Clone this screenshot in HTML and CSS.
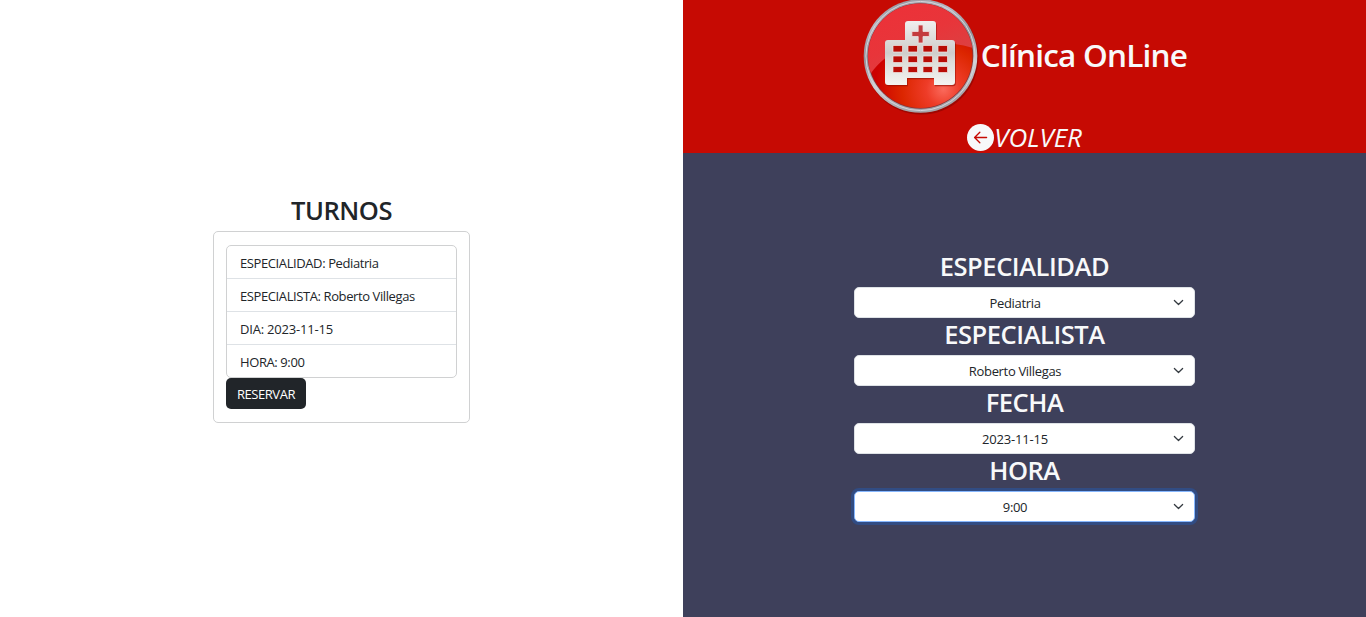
FILE: index.html
```html
<!DOCTYPE html>
<html lang="es">
<head>
<meta charset="utf-8">
<title>Clínica OnLine</title>
<link rel="stylesheet" href="styles.css">
</head>
<body>
<main class="page">
  <section class="summary">
    <h2 class="heading heading-dark">TURNOS</h2>
    <div class="card">
      <ul class="list">
        <li class="item">ESPECIALIDAD: Pediatria</li>
        <li class="item">ESPECIALISTA: Roberto Villegas</li>
        <li class="item item-num">DIA: 2023-11-15</li>
        <li class="item">HORA: 9:00</li>
      </ul>
      <button class="reserve" type="button">RESERVAR</button>
    </div>
  </section>
  <section class="booking">
    <header class="header">
      <div class="brand">
        <svg class="logo" viewBox="0 0 118 116" aria-hidden="true">
          <defs>
            <linearGradient id="ring" x1="0" y1="0" x2="0.25" y2="1">
              <stop offset="0" stop-color="#85858e"/>
              <stop offset=".25" stop-color="#b9b9c2"/>
              <stop offset=".5" stop-color="#909097"/>
              <stop offset=".75" stop-color="#d0d0d5"/>
              <stop offset="1" stop-color="#a5a5aa"/>
            </linearGradient>
            <radialGradient id="disc" cx=".72" cy=".82" r=".66">
              <stop offset="0" stop-color="#fa6a5c"/>
              <stop offset=".25" stop-color="#ee3c28"/>
              <stop offset=".6" stop-color="#dc2600"/>
              <stop offset="1" stop-color="#cc0000"/>
            </radialGradient>
            <linearGradient id="gloss" x1="0" y1="0" x2=".6" y2="1">
              <stop offset="0" stop-color="#ee3038"/>
              <stop offset=".55" stop-color="#e8353a"/>
              <stop offset="1" stop-color="#d84444"/>
            </linearGradient>
            <linearGradient id="steel" x1="0" y1="0" x2="0" y2="1">
              <stop offset="0" stop-color="#f0eeee"/>
              <stop offset=".5" stop-color="#cfcdcb"/>
              <stop offset=".62" stop-color="#dcdcd8"/>
              <stop offset="1" stop-color="#f4f4f2"/>
            </linearGradient>
            <clipPath id="inner"><circle cx="57.5" cy="56" r="52.5"/></clipPath>
          </defs>
          <circle cx="58.4" cy="57.6" r="57" fill="#7d0500" opacity=".55"/>
          <circle cx="57.5" cy="56" r="56.8" fill="url(#ring)"/>
          <circle cx="57.5" cy="56" r="54.6" fill="none" stroke="#d4d4dc" stroke-width="1"/>
          <circle cx="57.5" cy="56" r="52.8" fill="#86343a"/>
          <circle cx="57.5" cy="56" r="52" fill="url(#disc)"/>
          <path clip-path="url(#inner)" fill="url(#gloss)" d="M5 78C24 45 66 35 110 48V0H5z"/>
          <path transform="translate(.8 1.2)" fill="#8d0b02" opacity=".6" d="M45 21h25q3 0 3 3v16h16q3 0 3 3v39q0 3-3 3H71v-7H44v7H25q-3 0-3-3V43q0-3 3-3h17V24q0-3 3-3z"/>
          <path fill="url(#steel)" d="M45 21h25q3 0 3 3v16h16q3 0 3 3v39q0 3-3 3H71v-7H44v7H25q-3 0-3-3V43q0-3 3-3h17V24q0-3 3-3z"/>
          <path fill="#c43b3e" stroke="#f0dede" stroke-width=".8" d="M55.200 25h4.800v6.500h6.300v5h-6.300v6.500h-4.800v-6.500h-6.300v-5h6.300z"/>
          <g fill="#b80d06" stroke="#f2e7e4" stroke-width=".7">
            <path d="M30 45.500h9.500v6.500h-9.500zM45 45.500h9.500v6.500h-9.500zM60 45.500h9.500v6.500h-9.500zM75 45.500h9.500v6.500h-9.500z"/>
            <path d="M30 56h9.500v6.500h-9.500zM45 56h9.500v6.500h-9.500zM60 56h9.500v6.500h-9.500zM75 56h9.500v6.500h-9.500z"/>
            <path d="M30 66.500h9.500v6h-9.500zM45 66.500h9.500v6h-9.500zM60 66.500h9.500v6h-9.500zM75 66.500h9.500v6h-9.500z"/>
          </g>
        </svg>
        <h1 class="title">Clínica OnLine</h1>
      </div>
      <a class="back">
        <svg class="back-icon" viewBox="0 0 16 16" aria-hidden="true"><circle cx="8" cy="8" r="8" fill="currentColor"/><path d="M11.600 8H4.600M7.600 4.900 4.500 8l3.100 3.100" fill="none" stroke="#c60a03" stroke-width=".8" stroke-linecap="round" stroke-linejoin="round"/></svg>
        <span class="back-text">VOLVER</span>
      </a>
    </header>
    <form class="form">
      <h2 class="heading">ESPECIALIDAD</h2>
      <div class="select"><span class="value">Pediatria</span><svg class="chevron" viewBox="0 0 16 16"><path d="m2 5 6 6 6-6"/></svg></div>
      <h2 class="heading">ESPECIALISTA</h2>
      <div class="select"><span class="value">Roberto Villegas</span><svg class="chevron" viewBox="0 0 16 16"><path d="m2 5 6 6 6-6"/></svg></div>
      <h2 class="heading">FECHA</h2>
      <div class="select"><span class="value value-num">2023-11-15</span><svg class="chevron" viewBox="0 0 16 16"><path d="m2 5 6 6 6-6"/></svg></div>
      <h2 class="heading">HORA</h2>
      <div class="select select-focus"><span class="value">9:00</span><svg class="chevron" viewBox="0 0 16 16"><path d="m2 5 6 6 6-6"/></svg></div>
    </form>
  </section>
</main>
</body>
</html>
```
FILE: styles.css
```css
* { box-sizing: border-box; }
body {
  margin: 0;
  font: 400 13px/19px "Open Sans", "Noto Sans", sans-serif;
  color: #212529;
  background: #fff;
}
.page { display: grid; grid-template-columns: 1fr 1fr; height: 617px; }
.summary { display: flex; flex-direction: column; align-items: center; padding-top: 195px; }
.heading {
  margin: 0 0 5px;
  font-size: 25.500px;
  line-height: 31px;
  font-weight: 600;
  letter-spacing: -0.450px;
  text-align: center;
  color: #f8f9fa;
}
.heading-dark { color: #212529; }
.card { width: 257px; height: 192px; padding: 13px 12px; border: 1px solid #d0d1d2; border-radius: 5px; }
.list { margin: 0; padding: 0; list-style: none; border: 1px solid #d0d1d2; border-radius: 5px; }
.item { height: 33px; padding: 8px 13px 5px; border-bottom: 1px solid #dee2e6; letter-spacing: -0.400px; white-space: nowrap; }
.item-num { letter-spacing: -0.200px; }
.item:last-child { height: 32px; border-bottom: 0; }
.reserve {
  display: block;
  width: 80px;
  height: 31px;
  padding: 2px 0 0;
  border: 0;
  border-radius: 5px;
  background: #212529;
  color: #fff;
  font: inherit;
  letter-spacing: -0.450px;
}
.booking { display: flex; flex-direction: column; background: #3e405b; }
.header { height: 153px; background: #c60a03; color: #f8f9fa; }
.brand { display: flex; align-items: center; justify-content: center; height: 121px; padding-left: 1px; }
.logo { width: 118px; height: 116px; margin-top: -6px; flex: none; }
.title { margin: -11px 0 0; font-size: 31.500px; line-height: 40px; font-weight: 600; letter-spacing: -0.780px; white-space: nowrap; }
.back { display: flex; align-items: center; justify-content: center; height: 31px; }
.back-icon { width: 27px; height: 27px; margin-top: 1px; }
.back-text { font-size: 26px; line-height: 30px; font-style: italic; letter-spacing: -0.100px; }
.form { width: 341px; margin: 98px auto 0; }
.select {
  display: flex;
  align-items: center;
  height: 31px;
  margin-bottom: 1px;
  padding: 0 10px 0 0;
  border: 1px solid #dee2e6;
  border-radius: 5px;
  background: #fff;
}
.select-focus { border-color: #86b7fe; box-shadow: 0 0 0 3px rgba(13, 110, 253, .25); }
.value { flex: 1; padding: 2px 0 0 2px; text-align: center; letter-spacing: -0.330px; }
.value-num { letter-spacing: -0.200px; }
.chevron { width: 11px; height: 11px; fill: none; stroke: #343a40; stroke-width: 1.800; stroke-linecap: round; stroke-linejoin: round; }
```
